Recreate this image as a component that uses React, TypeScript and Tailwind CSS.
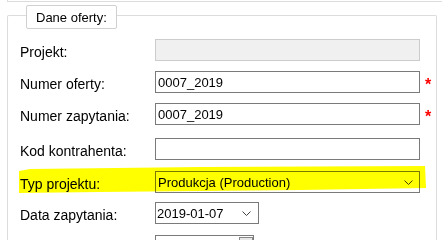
import React from "react";

const font = { fontFamily: '"Liberation Sans", Arial, sans-serif' };

function Chevron() {
  return (
    <svg width="9" height="5" viewBox="0 0 9 5" className="block">
      <path d="M0.5 0.5 L4.5 4.5 L8.5 0.5" fill="none" stroke="#404040" strokeWidth="1" />
    </svg>
  );
}

function Row({ label, mt, children }: { label: string; mt: string; children: React.ReactNode }) {
  return (
    <div className={`flex items-center h-[22px] ${mt}`}>
      <div className="w-[135px] shrink-0 text-[14px] text-black leading-none pt-[3px]">{label}</div>
      {children}
    </div>
  );
}

function Star() {
  return <span className="ml-[5px] text-[#ff0000] text-[16px] font-bold leading-none pt-[6px]">*</span>;
}

export default function App() {
  return (
    <div className="relative w-[442px] h-[240px] bg-white overflow-hidden" style={font}>
      <div className="ml-[7px] h-[2px] border-l border-b border-[#dcdcdc]" />
      <div className="ml-[7px] mt-[13px] w-[430px] h-[240px] border-t border-l border-r border-[#dcdcdc] rounded-tl-[2px] rounded-tr-[2px] pl-[12px]">
        <div className="ml-[6px] -mt-[11px] w-[91px] h-[24px] border border-[#d0d0d0] rounded-[2px] bg-white flex items-center pl-[9px] text-[13px] text-black leading-none">
          Dane oferty:
        </div>
        <Row label="Projekt:" mt="mt-[10px]">
          <div className="w-[265px] h-[22px] border border-[#cccccc] bg-[#f0f0f0]" />
        </Row>
        <Row label="Numer oferty:" mt="mt-[10px]">
          <div className="w-[265px] h-[22px] border border-[#7a7a7a] bg-white flex items-center pl-[2px] text-[13px] leading-none">0007_2019</div>
          <Star />
        </Row>
        <Row label="Numer zapytania:" mt="mt-[10px]">
          <div className="w-[265px] h-[22px] border border-[#7a7a7a] bg-white flex items-center pl-[2px] text-[13px] leading-none">0007_2019</div>
          <Star />
        </Row>
        <Row label="Kod kontrahenta:" mt="mt-[13px]">
          <div className="w-[265px] h-[22px] border border-[#7a7a7a] bg-white" />
        </Row>
        <Row label="Typ projektu:" mt="mt-[11px]">
          <div className="w-[265px] h-[22px] border border-[#7a7a7a] bg-white flex items-center justify-between pl-[2px] pr-[6px] text-[13px] leading-none">
            <span>Produkcja (Production)</span>
            <Chevron />
          </div>
        </Row>
        <Row label="Data zapytania:" mt="mt-[9px]">
          <div className="w-[104px] h-[22px] border border-[#7a7a7a] bg-white flex items-center justify-between pl-[1px] pr-[7px] text-[13px] leading-none">
            <span>2019-01-07</span>
            <Chevron />
          </div>
        </Row>
        <Row label="" mt="mt-[11px]">
          <div className="w-[99px] h-[22px] border border-[#7a7a7a] bg-white relative">
            <div className="absolute right-[0px] top-[1px] w-[14px] h-[14px] border border-[#888] bg-[#e8e8e8]" />
          </div>
        </Row>
      </div>
      <svg className="absolute left-0 top-0 pointer-events-none mix-blend-multiply" width="442" height="240">
        <polygon points="19,171 30,169 200,167 425,166 426,188 300,190 100,192 19,193" fill="#ffff00" />
      </svg>
    </div>
  );
}
